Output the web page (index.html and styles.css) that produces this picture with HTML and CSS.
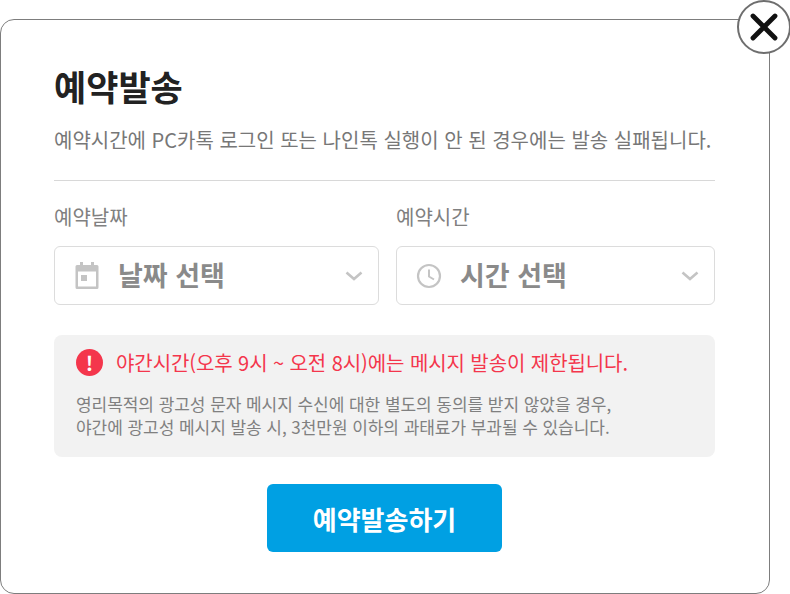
FILE: index.html
```html
<!DOCTYPE html>
<html lang="ko">
<head>
<meta charset="utf-8">
<title>예약발송</title>
<link rel="stylesheet" href="styles.css">
</head>
<body>
<div class="modal">
  <button class="close" aria-label="닫기">
    <svg width="32" height="32" viewBox="0 0 32 32"><path d="M5 5 27 27M27 5 5 27" fill="none" stroke="#111" stroke-width="4.800" stroke-linecap="round"/></svg>
  </button>
  <h1 class="title">예약발송</h1>
  <p class="desc">예약시간에 PC카톡 로그인 또는 나인톡 실행이 안 된 경우에는 발송 실패됩니다.</p>
  <hr class="rule">
  <div class="fields">
    <div class="field">
      <div class="label">예약날짜</div>
      <div class="select">
        <svg class="sicon" width="26" height="30" viewBox="0 0 26 30"><path fill="#c4c4c4" fill-rule="evenodd" d="M6 1h3v3h8V1h3v3h3a1.500 1.500 0 0 1 1.500 1.500v21A1.500 1.500 0 0 1 23 28H3a1.500 1.500 0 0 1-1.500-1.500v-21A1.500 1.500 0 0 1 3 4h3zM4 10.500V25.500h18V10.500zM7 14h6v6H7z"/></svg>
        <span class="value">날짜 선택</span>
        <svg class="chev" width="18" height="10" viewBox="0 0 18 10"><path d="M1.500 1.500 9 8l7.500-6.500" fill="none" stroke="#c4c4c4" stroke-width="2.600"/></svg>
      </div>
    </div>
    <div class="field">
      <div class="label">예약시간</div>
      <div class="select">
        <svg class="sicon" width="26" height="30" viewBox="0 0 26 30"><circle cx="13" cy="15" r="11" fill="none" stroke="#c4c4c4" stroke-width="2.200"/><path d="M13 8.500V15.500L18 18.500" fill="none" stroke="#c4c4c4" stroke-width="2"/></svg>
        <span class="value">시간 선택</span>
        <svg class="chev" width="18" height="10" viewBox="0 0 18 10"><path d="M1.500 1.500 9 8l7.500-6.500" fill="none" stroke="#c4c4c4" stroke-width="2.600"/></svg>
      </div>
    </div>
  </div>
  <div class="notice">
    <div class="warn">
      <span class="bang">!</span>
      <span class="warn-text">야간시간(오후 9시 ~ 오전 8시)에는 메시지 발송이 제한됩니다.</span>
    </div>
    <p class="notice-body">영리목적의 광고성 문자 메시지 수신에 대한 별도의 동의를 받지 않았을 경우,<br>야간에 광고성 메시지 발송 시, 3천만원 이하의 과태료가 부과될 수 있습니다.</p>
  </div>
  <div class="actions"><button class="submit">예약발송하기</button></div>
</div>
</body>
</html>
```
FILE: styles.css
```css
* { box-sizing: border-box; }
html, body { margin: 0; padding: 0; background: #fff; }
body {
  width: 790px;
  height: 594px;
  overflow: hidden;
  font-family: "Noto Sans CJK KR", "Noto Sans", sans-serif;
  padding: 19px 20px 0 0;
}
.modal {
  position: relative;
  width: 770px;
  height: 575px;
  background: #fff;
  border: 1px solid #7d7d7d;
  border-radius: 14px;
  padding: 42px 54px 0 53px;
}
.close {
  position: absolute;
  top: -20px;
  right: -22px;
  width: 54px;
  height: 54px;
  padding: 0;
  border: 2px solid #6e6e6e;
  border-radius: 50%;
  background: #fff;
  display: flex;
  align-items: center;
  justify-content: center;
}
.title {
  margin: 0;
  font-size: 35px;
  line-height: 48px;
  font-weight: 700;
  color: #222;
}
.desc {
  margin: 16px 0 0;
  font-size: 20px;
  line-height: 28px;
  color: #777;
  white-space: nowrap;
}
.rule {
  margin: 26px 0 0;
  border: 0;
  border-top: 1px solid #d8d8d8;
}
.fields {
  display: grid;
  grid-template-columns: 325px 319px;
  column-gap: 17px;
  margin-top: 23px;
}
.label {
  font-size: 20px;
  line-height: 26px;
  color: #808080;
}
.select {
  display: flex;
  align-items: center;
  height: 59px;
  margin-top: 16px;
  padding: 0 15px 0 19px;
  border: 1px solid #dcdcdc;
  border-radius: 6px;
}
.value {
  flex: 1;
  margin-left: 18px;
  font-size: 27px;
  font-weight: 700;
  color: #8a8a8a;
  line-height: 36px;
  position: relative;
  top: -1px;
}
.notice {
  margin-top: 30px;
  height: 122px;
  padding: 12px 22px 0;
  background: #f2f2f2;
  border-radius: 8px;
}
.warn {
  display: flex;
  align-items: center;
  height: 30px;
}
.bang {
  width: 27px;
  height: 27px;
  border-radius: 50%;
  background: #f4364c;
  color: #fff;
  font-size: 20px;
  line-height: 27px;
  font-weight: 700;
  text-align: center;
}
.warn-text {
  margin-left: 13px;
  font-size: 20px;
  color: #f4364c;
  letter-spacing: -0.08px;
  white-space: nowrap;
}
.notice-body {
  margin: 15px 0 0;
  font-size: 17px;
  line-height: 23px;
  color: #808080;
  letter-spacing: -0.05px;
  white-space: nowrap;
}
.actions {
  display: flex;
  justify-content: center;
  margin-top: 27px;
}
.submit {
  width: 235px;
  height: 68px;
  border: 0;
  border-radius: 6px;
  background: #00a0e3;
  color: #fff;
  font-family: inherit;
  font-size: 26px;
  font-weight: 700;
}
```
